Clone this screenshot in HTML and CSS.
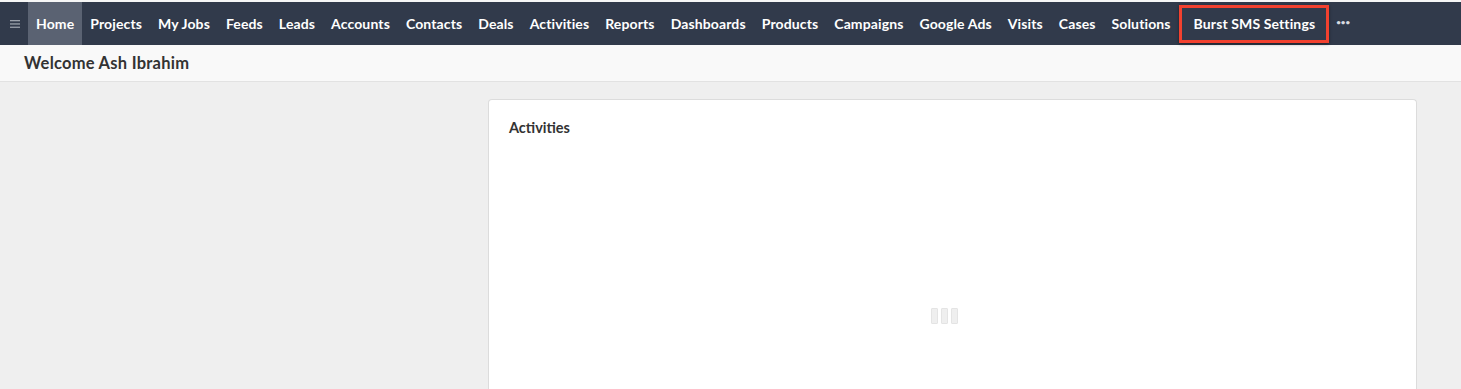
FILE: index.html
```html
<!DOCTYPE html>
<html>
<head>
<meta charset="utf-8">
<link rel="stylesheet" href="styles.css">
</head>
<body>
<div class="page">
  <nav class="topnav">
    <div class="menu-toggle">
      <svg width="10" height="8" viewBox="0 0 10 8"><rect x="0" y="0" width="10" height="1.3" fill="#9ba1ab"/><rect x="0" y="3.3" width="10" height="1.3" fill="#9ba1ab"/><rect x="0" y="6.6" width="10" height="1.3" fill="#9ba1ab"/></svg>
    </div>
    <a class="nav-item active">Home</a>
    <a class="nav-item">Projects</a>
    <a class="nav-item">My Jobs</a>
    <a class="nav-item">Feeds</a>
    <a class="nav-item">Leads</a>
    <a class="nav-item">Accounts</a>
    <a class="nav-item">Contacts</a>
    <a class="nav-item">Deals</a>
    <a class="nav-item">Activities</a>
    <a class="nav-item">Reports</a>
    <a class="nav-item">Dashboards</a>
    <a class="nav-item">Products</a>
    <a class="nav-item">Campaigns</a>
    <a class="nav-item">Google Ads</a>
    <a class="nav-item">Visits</a>
    <a class="nav-item">Cases</a>
    <a class="nav-item">Solutions</a>
    <a class="nav-item marked">Burst SMS Settings</a>
    <a class="nav-item more">•••</a>
  </nav>
  <header class="welcome">Welcome Ash Ibrahim</header>
  <main class="content">
    <div class="left-col"></div>
    <section class="card">
      <h2 class="card-title">Activities</h2>
      <div class="loader">
        <span></span><span></span><span></span>
      </div>
    </section>
  </main>
</div>
</body>
</html>
```
FILE: styles.css
```css
* { box-sizing: border-box; }
html, body { margin: 0; padding: 0; }
body {
  font-family: Lato, "Open Sans", sans-serif;
  background: #efefef;
  height: 389px;
  overflow: hidden;
}
.page {
  padding-top: 2px;
  background: #f6f6f6;
}
.topnav {
  display: flex;
  align-items: stretch;
  height: 43px;
  background: #313a4b;
}
.menu-toggle {
  width: 28px;
  display: flex;
  align-items: center;
  justify-content: center;
  padding-left: 1px;
}
.nav-item {
  display: flex;
  align-items: center;
  padding: 0 8px;
  color: #ffffff;
  font-size: 14px;
  letter-spacing: 0.12px;
  font-weight: 700;
  white-space: nowrap;
  position: relative;
}
.nav-item.active {
  background: #5a6272;
}
.nav-item.marked {
  padding: 0 14px 0 15px;
}
.nav-item.marked::after {
  content: "";
  position: absolute;
  left: 0;
  right: 0;
  top: 3px;
  bottom: 2px;
  border: 3px solid #f2412f;
  box-shadow: 0 1px 3px rgba(0,0,0,0.45);
}
.nav-item.more {
  font-size: 8px;
  letter-spacing: 0;
  padding-left: 7px;
  padding-bottom: 3px;
  color: #d8dbe0;
}
.welcome {
  height: 37px;
  display: flex;
  align-items: center;
  padding-left: 24px;
  background: #f9f9f9;
  border-bottom: 1px solid #e2e2e2;
  font-size: 16.5px;
  letter-spacing: 0.25px;
  font-weight: 700;
  color: #333;
}
.content {
  display: flex;
  background: #efefef;
  padding: 17px 44px 0 0;
  height: 310px;
}
.left-col {
  width: 488px;
  flex: none;
}
.card {
  flex: 1;
  background: #fff;
  border: 1px solid #dcdcdc;
  border-bottom: none;
  border-radius: 4px 4px 0 0;
  padding: 19px 20px 0;
  display: flex;
  flex-direction: column;
}
.card-title {
  margin: 0;
  font-size: 14.5px;
  font-weight: 700;
  color: #333;
}
.loader {
  display: flex;
  gap: 3px;
  justify-content: center;
  margin-top: 172px;
  padding-right: 17px;
}
.loader span {
  width: 7px;
  height: 16px;
  background: #efefef;
  border: 1px solid #e4e4e4;
  border-radius: 1px;
}
```
